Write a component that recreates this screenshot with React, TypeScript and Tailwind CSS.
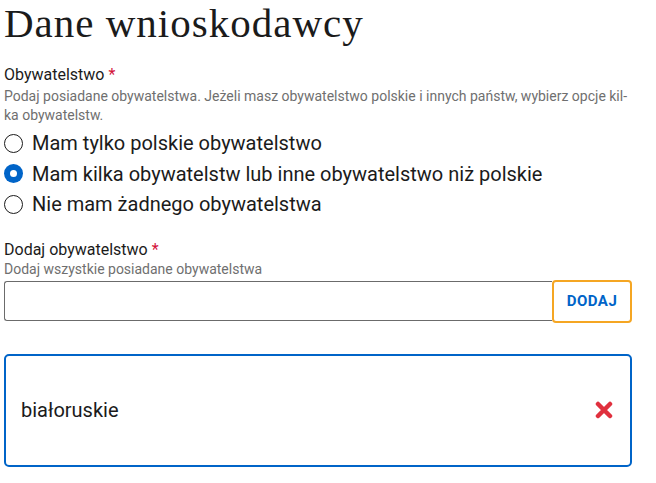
import { useState } from 'react';

const OPTIONS = [
  'Mam tylko polskie obywatelstwo',
  'Mam kilka obywatelstw lub inne obywatelstwo niż polskie',
  'Nie mam żadnego obywatelstwa',
];

function Radio({ checked }: { checked: boolean }) {
  if (checked) {
    return (
      <span className="flex h-[19px] w-[19px] shrink-0 items-center justify-center rounded-full bg-[#0064c8]">
        <span className="h-[7px] w-[7px] rounded-full bg-white" />
      </span>
    );
  }
  return <span className="h-[19px] w-[19px] shrink-0 rounded-full border-[1.5px] border-[#1b1b1b]" />;
}

export default function App() {
  const [choice, setChoice] = useState(1);
  const [items, setItems] = useState<string[]>(['białoruskie']);

  return (
    <div lang="pl" className="bg-white px-[4px] pt-[1px] font-['Roboto',sans-serif] text-[#1b1b1b]">
      <h1 className="font-['Liberation_Serif',serif] text-[41px] leading-[44px] tracking-[1px] text-[#1b1b1b]">Dane wnioskodawcy</h1>

      <div className="mt-[20px]">
        <p className="text-[16px] leading-[20px]">
          Obywatelstwo<span className="ml-1 text-[#d3133a]">*</span>
        </p>
        <p className="mt-[2px] w-[628px] text-[14px] leading-[19px] text-[#6f6f6f]">
          Podaj posiadane obywatelstwa. Jeżeli masz obywatelstwo polskie i innych państw, wybierz opcje kil-
          <br />
          ka obywatelstw.
        </p>
        <div className="mt-[3px] flex flex-col">
          {OPTIONS.map((opt, i) => (
            <label key={opt} onClick={() => setChoice(i)} className="flex h-[30.5px] cursor-pointer items-center gap-[9px]">
              <Radio checked={choice === i} />
              <span className="text-[20px] leading-[24px]">{opt}</span>
            </label>
          ))}
        </div>
      </div>

      <div className="mt-[20px]">
        <p className="text-[16px] leading-[20px]">
          Dodaj obywatelstwo<span className="ml-1 text-[#d3133a]">*</span>
        </p>
        <p className="mt-[1px] text-[14px] leading-[17px] text-[#6f6f6f]">Dodaj wszystkie posiadane obywatelstwa</p>
        <div className="mt-[2px] flex w-[628px] items-center">
          <input className="h-[40px] flex-1 rounded-l-[3px] border border-r-0 border-[#6b6b6b] px-3 text-[16px] outline-none" />
          <button className="flex h-[43px] w-[80px] items-center justify-center rounded-[4px] border-2 border-[#f5a623] text-[15px] font-bold tracking-[0.5px] text-[#0064c8]">
            DODAJ
          </button>
        </div>
      </div>

      <div className="mt-[31px] flex w-[628px] flex-col gap-3">
        {items.map((it) => (
          <div key={it} className="flex h-[113px] items-center justify-between rounded-[5px] border-2 border-[#0064c8] pl-[15px] pr-[17px]">
            <span className="text-[20px]">{it}</span>
            <button aria-label="Usuń" onClick={() => setItems(items.filter((x) => x !== it))}>
              <svg width="18" height="18" viewBox="0 0 18 18">
                <path d="M3 3 L15 15 M15 3 L3 15" stroke="#e0303e" strokeWidth="4.5" strokeLinecap="round" />
              </svg>
            </button>
          </div>
        ))}
      </div>
    </div>
  );
}
